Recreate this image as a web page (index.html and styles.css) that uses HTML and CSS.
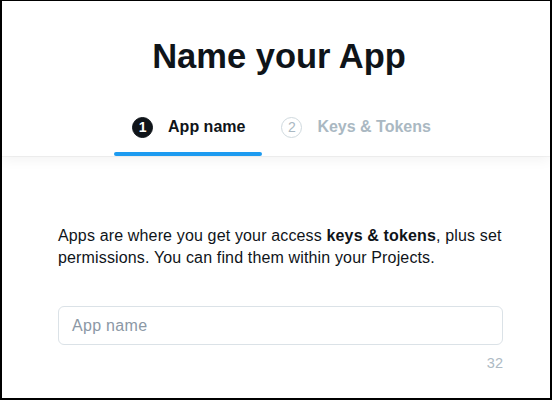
FILE: index.html
```html
<!DOCTYPE html>
<html>
<head>
<meta charset="utf-8">
<link rel="stylesheet" href="styles.css">
</head>
<body>
<div class="frame">
  <header class="head">
    <h1 class="title">Name your App</h1>
    <nav class="tabs">
      <div class="tab active">
        <span class="num">1</span>
        <span class="label">App name</span>
      </div>
      <div class="tab">
        <span class="num">2</span>
        <span class="label">Keys &amp; Tokens</span>
      </div>
    </nav>
  </header>
  <main class="content">
    <p class="desc">Apps are where you get your access <b>keys &amp; tokens</b>, plus set permissions. You can find them within your Projects.</p>
    <div class="field">App name</div>
    <div class="count">32</div>
  </main>
</div>
</body>
</html>
```

FILE: styles.css
```css
* { box-sizing: border-box; }
html, body { margin: 0; padding: 0; background: #fff; }
body { font-family: "Liberation Sans", Arial, sans-serif; color: #0f1419; }
.frame {
  width: 552px;
  height: 400px;
  border-style: solid;
  border-color: #000;
  border-width: 1px 2px 2px 2px;
  overflow: hidden;
  background: #fff;
}
.head {
  padding: 35px 0 0 10px;
  display: flex;
  flex-direction: column;
  align-items: center;
  position: relative;
  z-index: 1;
  box-shadow: 0 4px 12px rgba(0,0,0,0.05), 0 1px 0 rgba(0,0,0,0.04);
}
.title {
  margin: 0 0 0 -4px;
  font-size: 34.5px;
  line-height: 40px;
  font-weight: bold;
}
.tabs {
  display: flex;
  margin-top: 36px;
}
.tab {
  display: flex;
  align-items: center;
  gap: 15px;
  height: 44px;
  padding: 0 17px 14px 19px;
  font-size: 16px;
  font-weight: bold;
  color: #aab8c2;
  position: relative;
}
.tab.active {
  color: #0f1419;
  padding-left: 18px;
}
.tab.active::after {
  content: "";
  position: absolute;
  left: 0; right: 0; bottom: 0;
  height: 4px;
  border-radius: 2px;
  background: #1d9bf0;
}
.num {
  width: 21px;
  height: 21px;
  border-radius: 50%;
  display: flex;
  align-items: center;
  justify-content: center;
  font-size: 14px;
  border: 1.5px solid #cfd9de;
  color: #aab8c2;
  font-weight: normal;
}
.tab.active .num {
  background: #0f1419;
  border-color: #0f1419;
  color: #fff;
  font-weight: bold;
}
.content {
  padding: 69px 47px 0 56px;
}
.desc {
  margin: 0;
  font-size: 16px;
  letter-spacing: 0.15px;
  line-height: 22px;
  color: #0f1419;
}
.field {
  margin-top: 37px;
  height: 39px;
  border: 1px solid #dbe2e7;
  border-radius: 6px;
  padding-left: 13px;
  display: flex;
  align-items: center;
  font-size: 16px;
  letter-spacing: 0.3px;
  color: #8b98a5;
}
.count {
  text-align: right;
  margin-top: 10px;
  font-size: 14.5px;
  line-height: 16px;
  color: #aebac4;
}
```
